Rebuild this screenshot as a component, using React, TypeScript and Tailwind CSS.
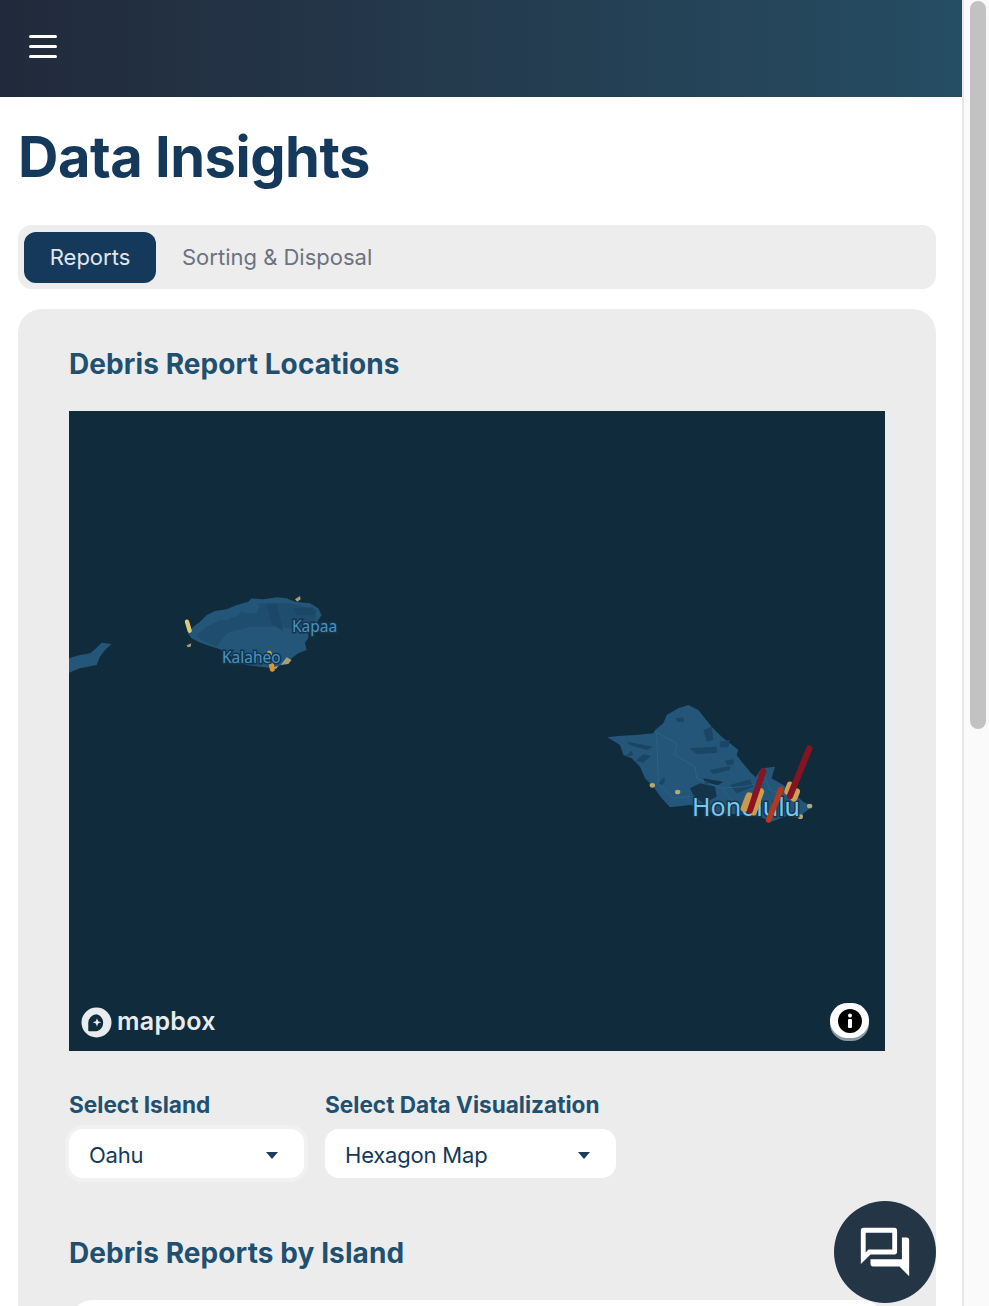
import { MdOutlineQuestionAnswer } from 'react-icons/md';

const font = { fontFamily: 'Inter, "Noto Sans", sans-serif' };

function MapArt() {
  return (
    <svg viewBox="0 0 816 640" className="absolute inset-0 h-full w-full">
      {/* Niihau + Kauai, drawn in crop coordinates */}
      <g transform="translate(-9 159) scale(0.3333)">
        <polygon fill="#235678" points="27,265 60,255 90,250 105,238 125,218 155,222 135,240 120,260 110,285 60,295 27,308" />
        <polygon fill="#235678" points="383,190 400,170 420,155 440,135 465,123 500,118 530,105 565,95 575,85 610,88 650,82 680,85 705,95 750,100 775,115 785,135 775,150 768,165 745,180 745,205 735,218 740,240 715,250 695,265 665,285 640,295 600,290 560,285 530,272 500,250 480,238 440,225 415,215 395,205" />
        <path fill="#1f4d6e" d="M410 195 L440 170 L480 150 L530 140 L560 110 L610 100 L690 100 L770 120 L765 165 L735 180 L650 170 L570 170 L500 190 L470 230 L425 210Z" />
        <path fill="#235678" d="M540 120 L575 95 L600 105 L590 130 L555 130Z M480 140 L525 125 L505 150 L485 150Z" />
        <path fill="#1b4563" d="M620 105 L650 100 L670 185 L635 160Z M700 115 L760 112 L765 135 L710 135Z" opacity="0.7" />
        <line x1="381" y1="155" x2="389" y2="182" stroke="#e2c77b" strokeWidth="13" strokeLinecap="round" />
        <line x1="628" y1="250" x2="637" y2="298" stroke="#d9973a" strokeWidth="15" strokeLinecap="round" />
        <path fill="#a99f73" d="M705 88 L720 78 L722 88 L712 95Z M380 226 L394 220 L392 230 L383 232Z M662 285 L680 262 L695 270 L685 282Z M640 292 L655 287 L648 298Z" />
      </g>
      {/* Oahu */}
      <g transform="translate(521 279) scale(0.3333)">
        <polygon fill="#235678" points="52,142 85,138 135,135 190,130 195,120 220,100 230,75 265,55 295,45 325,60 345,85 365,110 395,140 420,160 445,180 440,195 455,215 480,245 497,262 515,235 555,230 545,265 580,285 610,310 640,335 668,350 640,370 635,385 590,378 545,395 510,380 470,375 420,372 370,370 345,355 300,345 240,352 215,325 190,290 165,265 150,230 125,205 100,195 90,165" />
        <path fill="#1b4564" d="M255 85 L280 82 L282 95 L265 96Z M340 120 L365 110 L370 150 L350 155Z M390 155 L420 150 L415 172 L390 172Z M298 175 L380 170 L382 188 L320 192Z M405 212 L430 208 L432 222 L412 226Z M358 240 L422 228 L418 240 L370 252Z M110 155 L190 170 L170 180 L120 165Z M105 200 L125 182 L130 195Z M138 212 L160 192 L182 198 L160 218Z M205 280 L222 262 L225 275 L212 288Z M420 285 L480 268 L490 290 L440 310Z" />
        <path fill="#14344c" d="M300 295 L330 280 L375 290 L380 320 L340 340 L310 315Z M340 265 L400 275 L385 285 L345 280Z" />
        <path fill="none" stroke="#2d6a92" strokeWidth="2" d="M195 125 L260 160 L255 195 L315 230 L320 265 L395 295 L460 290 L530 275 M200 130 L205 280 L250 325 L300 320 M400 300 L440 350 M520 250 L540 300 L600 320" />
        <g fill="#b5a878">
          <ellipse cx="187" cy="286" rx="8" ry="7" />
          <ellipse cx="263" cy="306" rx="8" ry="7" />
          <ellipse cx="659" cy="348" rx="8" ry="7" />
          <ellipse cx="631" cy="380" rx="8" ry="7" />
        </g>
      </g>
      <g fontFamily='"Noto Sans", sans-serif' stroke="#14344c" strokeWidth="3" paintOrder="stroke">
        <text x="223" y="221" fontSize="15.500" fill="#4594c6">Kapaa</text>
        <text x="153" y="252" fontSize="15.500" fill="#4594c6">Kalaheo</text>
        <text x="623" y="405" fontSize="25" fill="#79c6f0">Honolulu</text>
      </g>
      <g transform="translate(521 279) scale(0.3333)" strokeLinecap="round" fill="none">
        <line x1="463" y1="355" x2="478" y2="318" stroke="#c99a4f" strokeWidth="22" />
        <line x1="490" y1="366" x2="512" y2="305" stroke="#cf9c4c" strokeWidth="21" />
        <line x1="480" y1="362" x2="520" y2="243" stroke="#8a1420" strokeWidth="18" />
        <line x1="593" y1="305" x2="600" y2="285" stroke="#d0a055" strokeWidth="20" />
        <line x1="612" y1="325" x2="620" y2="305" stroke="#d0a055" strokeWidth="20" />
        <line x1="600" y1="318" x2="658" y2="175" stroke="#84141f" strokeWidth="19" />
        <line x1="536" y1="390" x2="573" y2="298" stroke="#b33a20" strokeWidth="17" />
      </g>
    </svg>
  );
}

function SelectBox({ label, value, width, ring }: { label: string; value: string; width: string; ring?: boolean }) {
  return (
    <div className={width}>
      <div className="h-7 text-[22.6px] leading-7 font-bold text-[#1f5070]">{label}</div>
      <div className={`mt-[10px] flex h-[49px] items-center justify-between rounded-[14px] bg-white pt-[3px] pl-5 pr-[26px] text-[22px] tracking-[-0.2px] text-[#15395b] ${ring ? 'ring-4 ring-[#f1f1f1]' : ''}`}>
        <span>{value}</span>
        <span className="h-0 w-0 border-x-[6px] border-t-[7px] border-x-transparent border-t-[#1d3c5c]"></span>
      </div>
    </div>
  );
}

export default function App() {
  return (
    <div className="flex h-[1306px] overflow-hidden bg-white" style={font}>
      <main className="w-[962px] shrink-0">
        <header className="flex h-[97px] items-center bg-gradient-to-r from-[#212a3b] to-[#254d63] pl-[29px]">
          <div className="flex w-[28px] -translate-y-[2px] flex-col gap-[7px]">
            <span className="h-[3px] rounded-full bg-white"></span>
            <span className="h-[3px] rounded-full bg-white"></span>
            <span className="h-[3px] rounded-full bg-white"></span>
          </div>
        </header>

        <div className="pl-[18px] pr-[26px]">
          <h1 className="mt-[26px] h-[68px] text-[56px] leading-[68px] font-bold tracking-[-0.5px] text-[#15395b]">Data Insights</h1>

          <div className="mt-[34px] flex h-[64px] items-center rounded-[14px] bg-[#ededed] px-[6px]">
            <div className="flex h-[51px] w-[132px] items-center justify-center rounded-[12px] bg-[#15395b] text-[22px] text-[#e2e6ea]">Reports</div>
            <div className="ml-[26px] text-[22px] text-[#6b7280]">Sorting &amp; Disposal</div>
          </div>

          <section className="mt-[20px] h-[1100px] rounded-[24px] bg-[#ececec] px-[51px] pt-[35px]">
            <h2 className="h-10 text-[28px] leading-10 font-bold tracking-[0.09px] text-[#1f5070]">Debris Report Locations</h2>

            <div className="relative mt-[27px] h-[640px] w-[816px] overflow-hidden bg-[#102b3b]">
              <MapArt />
              <div className="absolute bottom-[13px] left-[12px] flex items-center gap-[5px]">
                <svg viewBox="0 0 32 32" className="h-[31px] w-[31px]">
                  <circle cx="16" cy="16" r="15.5" fill="#e8ecef" />
                  <path fill="#102b3b" d="M16 7.5a9 9 0 0 1 0 17.5h-7.5a1 1 0 0 1-1-1v-7.5a9 9 0 0 1 8.500-9z" />
                  <path fill="#e8ecef" d="M16.500 11.500l1.200 3.100 3.100 1.200-3.100 1.200-1.200 3.100-1.200-3.100-3.100-1.200 3.100-1.200z" />
                </svg>
                <span className="pb-[1px] text-[25px] leading-[31px] font-semibold tracking-[0.3px] text-[#e8ecef]" style={{ fontFamily: 'Inter, sans-serif' }}>mapbox</span>
              </div>
              <div className="absolute right-[16px] bottom-[13px] flex h-[35px] w-[39px] items-center justify-center rounded-full bg-white shadow-[0_3px_0_#8a9aa2]">
                <svg viewBox="0 0 24 24" className="h-[24px] w-[24px]">
                  <circle cx="12" cy="12" r="12" fill="#000" />
                  <rect x="10" y="10" width="4" height="9" rx="1" fill="#fff" />
                  <circle cx="12" cy="6.500" r="2" fill="#fff" />
                </svg>
              </div>
            </div>

            <div className="mt-[40px] flex gap-[21px]">
              <SelectBox label="Select Island" value="Oahu" width="w-[235px]" ring />
              <SelectBox label="Select Data Visualization" value="Hexagon Map" width="w-[291px]" />
            </div>

            <h2 className="mt-[55px] h-10 text-[28px] leading-10 font-bold tracking-[0.09px] text-[#1f5070]">Debris Reports by Island</h2>
            <div className="mt-[27px] h-[300px] rounded-[24px] bg-white"></div>
          </section>
        </div>
      </main>

      <aside className="w-[27px] shrink-0 border-l-2 border-[#e8e8e8] bg-[#fafafa] pl-[6px] pt-[1px]">
        <div className="h-[728px] w-[16px] rounded-full bg-[#c2c2c2]"></div>
      </aside>

      <button className="fixed left-[834px] top-[1201px] flex h-[102px] w-[102px] items-center justify-center rounded-full bg-[#243545] text-white">
        <MdOutlineQuestionAnswer size={58} />
      </button>
    </div>
  );
}
